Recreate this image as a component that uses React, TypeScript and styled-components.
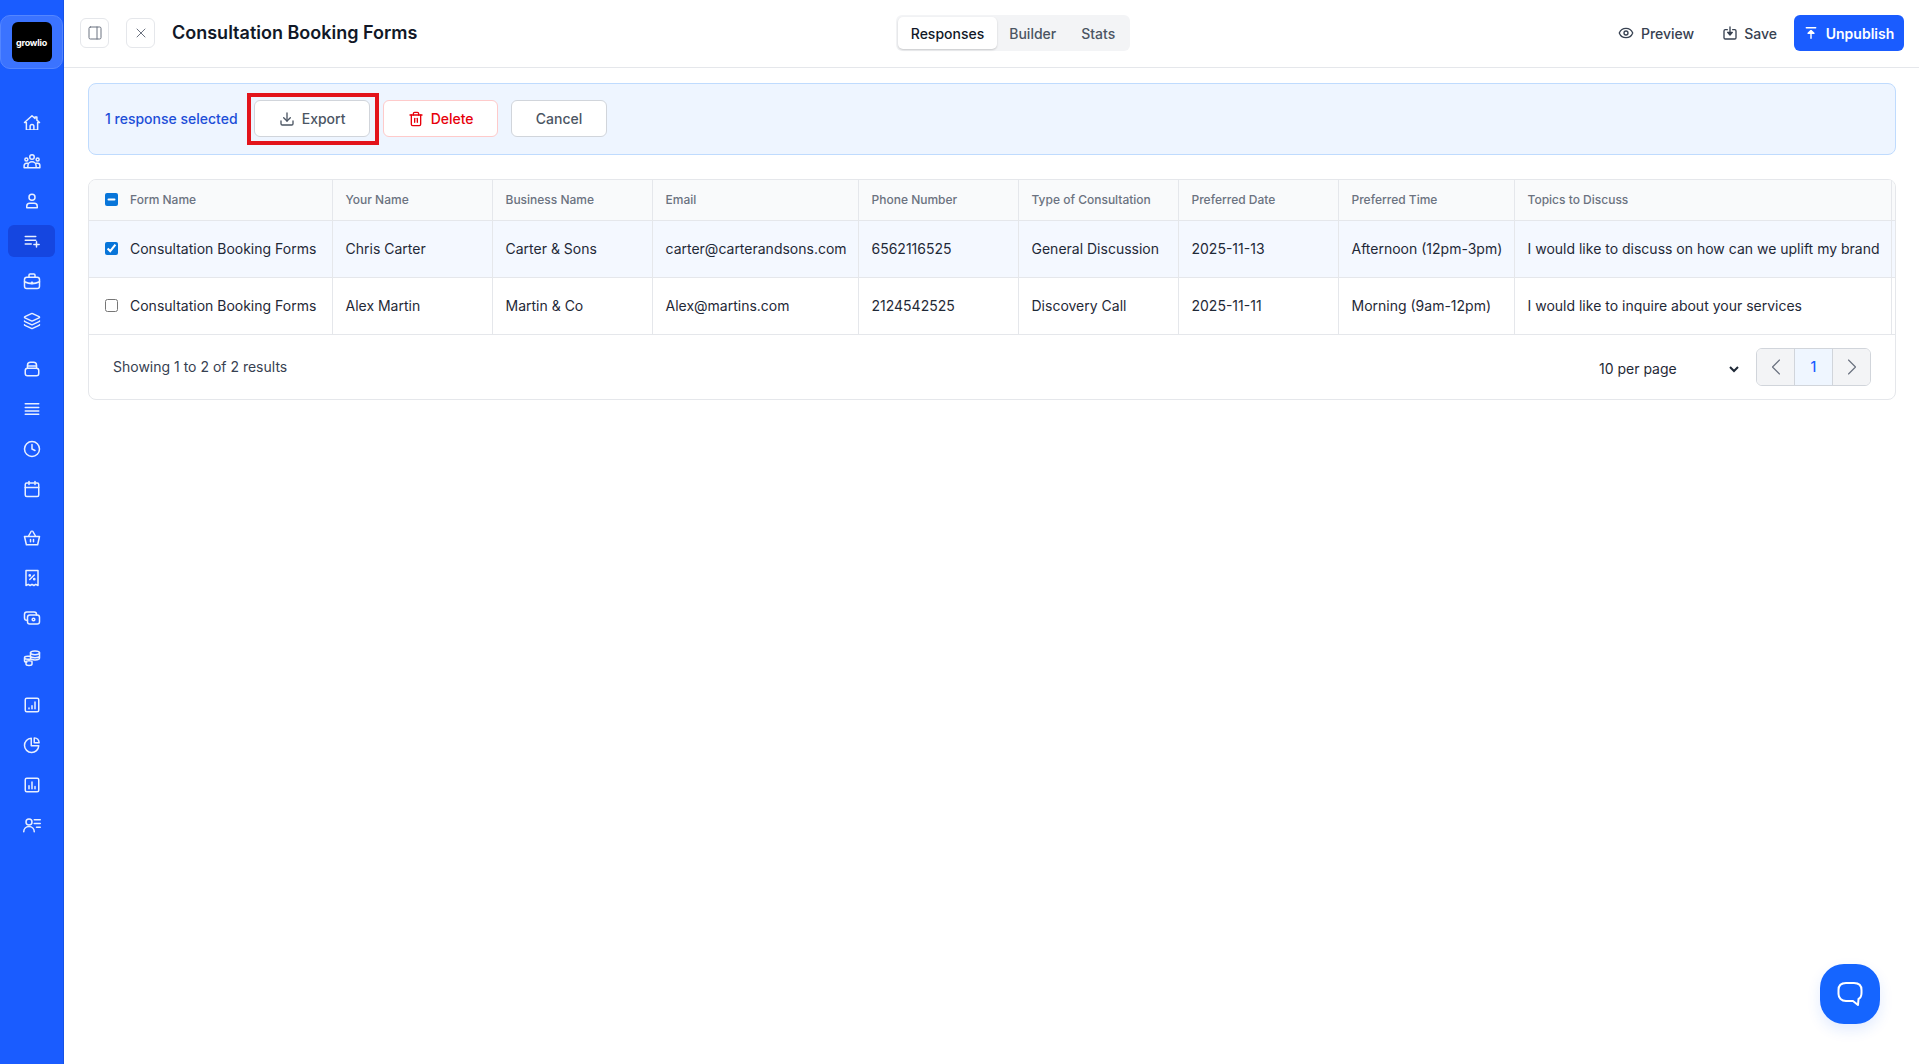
import React, { useEffect, useRef } from "react";
import styled, { createGlobalStyle } from "styled-components";
import {
  Calendar,
  ChevronLeft,
  ChevronRight,
  Clock,
  Download,
  Eye,
  Layers,
  PanelRight,
  Trash2,
  X,
} from "lucide-react";

const GlobalStyle = createGlobalStyle`
  html, body {
    margin: 0;
    padding: 0;
    background: #ffffff;
    font-family: Inter, "Liberation Sans", sans-serif;
    color: #1f2937;
  }
  * { box-sizing: border-box; }
`;

const Page = styled.div`
  display: flex;
  height: 100vh;
  overflow: hidden;
  position: relative;
`;

const Sidebar = styled.nav`
  width: 64px;
  flex: none;
  background: #1a5cff;
  border-right: 1px solid #1652e6;
  display: flex;
  flex-direction: column;
`;

const LogoTile = styled.div`
  margin-top: 15px;
  height: 54px;
  background: #3b73ff;
  border: 1px solid #5486ff;
  border-radius: 10px;
  display: flex;
  align-items: center;
  justify-content: center;
`;

const LogoMark = styled.div`
  width: 40px;
  height: 40px;
  background: #000;
  border-radius: 6px;
  color: #fff;
  font-size: 9px;
  font-weight: 700;
  letter-spacing: -0.2px;
  display: flex;
  align-items: center;
  justify-content: center;
`;

const NavGroup = styled.div<{ $top: number }>`
  display: flex;
  flex-direction: column;
  gap: 8px;
  margin-top: ${(p) => p.$top}px;
`;

const NavItem = styled.a<{ $active?: boolean }>`
  height: 32px;
  margin: 0 8px;
  border-radius: 6px;
  background: ${(p) => (p.$active ? "#1546e0" : "transparent")};
  color: #e8efff;
  display: flex;
  align-items: center;
  justify-content: center;
`;

const Main = styled.main`
  flex: 1;
  min-width: 0;
  display: flex;
  flex-direction: column;
`;

const TopBar = styled.header`
  height: 68px;
  flex: none;
  border-bottom: 1px solid #e5e7eb;
  padding: 0 15px 1px 16px;
  display: grid;
  grid-template-columns: 1fr auto 1fr;
  align-items: center;
`;

const TopLeft = styled.div`
  display: flex;
  align-items: center;
`;

const SquareButton = styled.button`
  width: 29px;
  height: 30px;
  margin-right: 17px;
  padding: 0;
  background: #fff;
  border: 1px solid #e5e7eb;
  border-radius: 6px;
  color: #6b7280;
  display: flex;
  align-items: center;
  justify-content: center;
`;

const Title = styled.h1`
  margin: 0;
  font-size: 18px;
  line-height: 28px;
  font-weight: 600;
  color: #111827;
`;

const Tabs = styled.div`
  height: 36px;
  padding: 2px;
  margin-left: 42px;
  background: #f3f4f6;
  border-radius: 6px;
  display: flex;
  align-items: center;
`;

const Tab = styled.button<{ $active?: boolean }>`
  height: 32px;
  padding: 0 12.5px;
  border: 0;
  border-radius: 5px;
  font: 500 14px Inter, sans-serif;
  background: ${(p) => (p.$active ? "#fff" : "transparent")};
  color: ${(p) => (p.$active ? "#111827" : "#4b5563")};
  box-shadow: ${(p) => (p.$active ? "0 1px 2px rgba(0,0,0,.18)" : "none")};
`;

const TopRight = styled.div`
  display: flex;
  align-items: center;
  justify-content: flex-end;
`;

const GhostButton = styled.button<{ $gap: number; $after: number }>`
  height: 36px;
  padding: 0;
  margin-right: ${(p) => p.$after}px;
  background: none;
  border: 0;
  color: #374151;
  font: 500 14px Inter, sans-serif;
  display: flex;
  align-items: center;
  gap: ${(p) => p.$gap}px;
`;

const PublishButton = styled.button`
  height: 36px;
  width: 110px;
  background: #1a5cff;
  border: 0;
  border-radius: 6px;
  color: #fff;
  font: 600 14px Inter, sans-serif;
  display: flex;
  align-items: center;
  justify-content: center;
  gap: 8px;
`;

const Content = styled.div`
  padding: 15px 23px 0 24px;
  display: flex;
  flex-direction: column;
  gap: 24px;
`;

const Banner = styled.section`
  height: 72px;
  background: #eef5ff;
  border: 1px solid #bfdbfe;
  border-radius: 8px;
  padding: 0 16px 1px;
  display: flex;
  align-items: center;
  gap: 13px;
`;

const SelectedLabel = styled.span`
  font-size: 14px;
  font-weight: 500;
  color: #1d4ed8;
  margin-right: 3px;
`;

const ActionButton = styled.button<{ $danger?: boolean }>`
  position: relative;
  height: 37px;
  padding: 0 0 0 1px;
  width: ${(p) => (p.$danger ? "115px" : "96px")};
  background: #fff;
  border: 1px solid ${(p) => (p.$danger ? "#fecaca" : "#d1d5db")};
  border-radius: 6px;
  color: ${(p) => (p.$danger ? "#e7000b" : "#4b5563")};
  font: 500 14px Inter, sans-serif;
  display: flex;
  align-items: center;
  justify-content: center;
  gap: 7px;
`;

const ExportButton = styled(ActionButton)`
  width: 116px;
  &::after {
    content: "";
    position: absolute;
    inset: -8px -10px -9px -8px;
    border: 4px solid #e3141b;
    pointer-events: none;
  }
`;

const TableCard = styled.section`
  border: 1px solid #e5e7eb;
  border-radius: 8px;
  overflow: hidden;
`;

const Table = styled.table`
  width: 1816px;
  table-layout: fixed;
  border-collapse: collapse;
`;

const HeadCell = styled.th`
  height: 40px;
  padding: 0 12px 0 13px;
  background: #f9fafb;
  border-right: 1px solid #e5e7eb;
  border-bottom: 1px solid #e5e7eb;
  text-align: left;
  font-size: 12px;
  font-weight: 500;
  color: #6b7280;
  white-space: nowrap;
`;

const BodyRow = styled.tr<{ $selected?: boolean }>`
  background: ${(p) => (p.$selected ? "#f4f8ff" : "#fff")};
`;

const BodyCell = styled.td`
  height: 57px;
  padding: 0 12px 0 13px;
  border-right: 1px solid #e5e7eb;
  border-bottom: 1px solid #e5e7eb;
  font-size: 14px;
  color: #1f2937;
  white-space: nowrap;
`;

const CheckWrap = styled.div`
  display: flex;
  align-items: center;
  gap: 12px;
  padding-left: 3px;
`;

const Check = styled.input`
  width: 13px;
  height: 13px;
  margin: 0;
  flex: none;
  accent-color: #0875d9;
`;

const Footer = styled.div`
  height: 64px;
  padding: 0 24px 0 24px;
  display: flex;
  align-items: center;
  justify-content: space-between;
`;

const ResultCount = styled.span`
  font-size: 14px;
  color: #374151;
`;

const FooterRight = styled.div`
  display: flex;
  align-items: center;
  gap: 14px;
`;

const PerPage = styled.select`
  width: 147px;
  height: 30px;
  padding: 0;
  margin-top: 4px;
  border: 0;
  background: #fff;
  font: 14px Inter, sans-serif;
  color: #1f2937;
  outline: none;
`;

const Pager = styled.div`
  height: 38px;
  display: flex;
  border: 1px solid #d1d5db;
  border-radius: 6px;
  overflow: hidden;
`;

const PagerCell = styled.button<{ $current?: boolean }>`
  width: ${(p) => (p.$current ? "39px" : "37px")};
  padding: 0;
  border: 0;
  border-left: ${(p) => (p.$current ? "1px solid #d1d5db" : "0")};
  border-right: ${(p) => (p.$current ? "1px solid #d1d5db" : "0")};
  background: ${(p) => (p.$current ? "#eff6ff" : "#f3f4f6")};
  color: ${(p) => (p.$current ? "#1a5cff" : "#6b7280")};
  font: 500 14px Inter, sans-serif;
  display: flex;
  align-items: center;
  justify-content: center;
`;

const ChatButton = styled.button`
  position: absolute;
  left: 1820px;
  top: 964px;
  width: 60px;
  height: 60px;
  padding: 0;
  border: 0;
  border-radius: 24px;
  background: #1565ff;
  box-shadow: 0 6px 14px rgba(21, 101, 255, 0.12);
  display: flex;
  align-items: center;
  justify-content: center;
`;

// icons the packages don't have in this shape
const Svg = ({ children }: { children: React.ReactNode }) => (
  <svg width="18" height="18" viewBox="0 0 24 24" fill="none" stroke="currentColor" strokeWidth="2" strokeLinecap="round" strokeLinejoin="round">
    {children}
  </svg>
);

const HomeIcon = () => (
  <svg width="18" height="18" viewBox="0 -3 24 24" fill="none" stroke="currentColor" strokeWidth="2" strokeLinecap="round" strokeLinejoin="round">
    <path d="M2 11 12 2l4 3.600V3.500h2.500v4.300L22 11h-2.500v10h-15V11z" />
    <path d="M9.500 21v-5a2.500 2.500 0 0 1 5 0v5" />
  </svg>
);

const TeamIcon = () => (
  <Svg>
    <circle cx="12" cy="6.500" r="3" />
    <circle cx="4.500" cy="10" r="2" />
    <circle cx="19.500" cy="10" r="2" />
    <path d="M6.500 21v-2.500a5.500 5.500 0 0 1 11 0V21M1.500 21v-3a3 3 0 0 1 3-3h2M22.500 21v-3a3 3 0 0 0-3-3h-2M1.500 21h21" />
  </Svg>
);

const UserIcon = () => (
  <Svg>
    <circle cx="12" cy="7" r="4" />
    <path d="M5 21v-2a4 4 0 0 1 4-4h6a4 4 0 0 1 4 4v2z" />
  </Svg>
);

const ListAddIcon = () => (
  <Svg>
    <path d="M3 6h14M3 11h14M3 16h8M18 13v7M14.500 16.500h7" />
  </Svg>
);

const CaseIcon = () => (
  <Svg>
    <rect x="2" y="7" width="20" height="15" rx="3" />
    <path d="M8 7V4a1.500 1.500 0 0 1 1.500-1.500h5A1.500 1.500 0 0 1 16 4v3M2 13c6 3 14 3 20 0" />
    <circle cx="12" cy="14.500" r="0.8" />
  </Svg>
);

const BagIcon = () => (
  <Svg>
    <path d="M6 11V7a4 4 0 0 1 4-4h4a4 4 0 0 1 4 4v4" />
    <rect x="3" y="11" width="18" height="10" rx="3" />
    <path d="M6 8h12" />
  </Svg>
);

const StackLinesIcon = () => (
  <Svg>
    <path d="M3 5h18M3 10h18M3 14.500h18M3 19h18" />
  </Svg>
);

const BasketIcon = () => (
  <Svg>
    <path d="M2 10h20l-2.500 11h-15zM7 10l4-7M17 10l-4-7M10 14v3M14 14v3" />
  </Svg>
);

const ReceiptIcon = () => (
  <Svg>
    <path d="M4 2h16v20l-3-1.500-2.500 1.500-2.500-1.500L9.500 22 7 20.500 4 22z" />
    <path d="M9 14l6-6" />
    <circle cx="9" cy="8.500" r="0.8" />
    <circle cx="15" cy="13.500" r="0.8" />
  </Svg>
);

const CashIcon = () => (
  <Svg>
    <rect x="6" y="8" width="16" height="12" rx="3" />
    <path d="M18 8V7a3 3 0 0 0-3-3H5a3 3 0 0 0-3 3v5a3 3 0 0 0 3 3h1" />
    <circle cx="14" cy="14" r="1.800" />
  </Svg>
);

const CoinsIcon = () => (
  <Svg>
    <ellipse cx="16" cy="5" rx="6" ry="2.500" />
    <path d="M10 5v7c0 1.400 2.700 2.500 6 2.500s6-1.100 6-2.500V5M10 9c0 1.400 2.700 2.500 6 2.500s6-1.100 6-2.500" />
    <path d="M10 9.500H6c-2.200 0-4 .8-4 2s1.800 2 4 2h4M2 11.500v4c0 1.100 1.500 2 3 2M4 17c0-.8 1.500-1.500 4-1.500s4 .7 4 1.500v3c0 1-1.800 2-4 2s-4-1-4-2z" />
  </Svg>
);

const ChartSquareIcon = () => (
  <Svg>
    <rect x="3" y="3" width="18" height="18" rx="2" />
    <path d="M8 17v-1M12 17v-4M16 17V8" />
  </Svg>
);

const PieIcon = () => (
  <Svg>
    <path d="M11 3a9.500 9.500 0 1 0 10 10H11z" />
    <path d="M15 2.500a7 7 0 0 1 6.500 6.500H15z" />
  </Svg>
);

const ReportIcon = () => (
  <Svg>
    <rect x="3" y="3" width="18" height="18" rx="2" />
    <path d="M8 17v-4M12 17V8M16 17v-3" />
  </Svg>
);

const UserListIcon = () => (
  <Svg>
    <circle cx="8" cy="8" r="4" />
    <path d="M1 21c0-4 3-7 7-7s7 3 7 7M15 5h8M15 10h8M18 15h5" />
  </Svg>
);

const SaveIcon = () => (
  <svg width="16" height="16" viewBox="0 0 24 24" fill="none" stroke="currentColor" strokeWidth="2" strokeLinecap="round" strokeLinejoin="round">
    <path d="M8 7H5a2 2 0 0 0-2 2v10a2 2 0 0 0 2 2h14a2 2 0 0 0 2-2V9a2 2 0 0 0-2-2h-3" />
    <path d="M12 3v10" />
    <path d="M8.500 11h7L12 15z" fill="currentColor" />
  </svg>
);

const UnpublishIcon = () => (
  <svg width="14" height="14" viewBox="0 0 24 24" fill="#fff" stroke="#fff" strokeWidth="2.500" strokeLinecap="round" strokeLinejoin="round">
    <path d="M4 3h16M12 21V9" />
    <path d="M7 12.500 12 8l5 4.500z" />
  </svg>
);

const BubbleIcon = () => (
  <svg width="26" height="26" viewBox="0 0 26 26" fill="none" stroke="#fff" strokeWidth="2" strokeLinejoin="round">
    <path d="M9 2h8c4.500 0 7.500 2.500 7.500 7v3c0 3-1 5-3 6l-.5 6-5-4H9c-4.500 0-7.500-3-7.500-7V9C1.500 4.500 4.500 2 9 2z" />
  </svg>
);

const navGroups: { top: number; icons: React.ReactNode[] }[] = [
  {
    top: 36,
    icons: [
      <HomeIcon />,
      <TeamIcon />,
      <UserIcon />,
      <ListAddIcon />,
      <CaseIcon />,
      <Layers size={18} />,
    ],
  },
  { top: 16, icons: [<BagIcon />, <StackLinesIcon />, <Clock size={18} />, <Calendar size={18} />] },
  { top: 17, icons: [<BasketIcon />, <ReceiptIcon />, <CashIcon />, <CoinsIcon />] },
  { top: 15, icons: [<ChartSquareIcon />, <PieIcon />, <ReportIcon />, <UserListIcon />] },
];

const columns: [string, number][] = [
  ["Form Name", 243],
  ["Your Name", 160],
  ["Business Name", 160],
  ["Email", 206],
  ["Phone Number", 160],
  ["Type of Consultation", 160],
  ["Preferred Date", 160],
  ["Preferred Time", 176],
  ["Topics to Discuss", 377],
  ["", 14],
];

const rows = [
  {
    selected: true,
    cells: [
      "Chris Carter",
      "Carter & Sons",
      "carter@carterandsons.com",
      "6562116525",
      "General Discussion",
      "2025-11-13",
      "Afternoon (12pm-3pm)",
      "I would like to discuss on how can we uplift my brand",
    ],
  },
  {
    selected: false,
    cells: [
      "Alex Martin",
      "Martin & Co",
      "Alex@martins.com",
      "2124542525",
      "Discovery Call",
      "2025-11-11",
      "Morning (9am-12pm)",
      "I would like to inquire about your services",
    ],
  },
];

function HeaderCheck() {
  const ref = useRef<HTMLInputElement>(null);
  useEffect(() => {
    if (ref.current) ref.current.indeterminate = true;
  }, []);
  return <Check ref={ref} type="checkbox" readOnly />;
}

export default function App() {
  return (
    <Page>
      <GlobalStyle />
      <Sidebar>
        <LogoTile>
          <LogoMark>growlio</LogoMark>
        </LogoTile>
        {navGroups.map((group, g) => (
          <NavGroup key={g} $top={group.top}>
            {group.icons.map((icon, i) => (
              <NavItem key={i} $active={g === 0 && i === 3}>
                {icon}
              </NavItem>
            ))}
          </NavGroup>
        ))}
      </Sidebar>
      <Main>
        <TopBar>
          <TopLeft>
            <SquareButton>
              <PanelRight size={16} strokeWidth={1.5} />
            </SquareButton>
            <SquareButton>
              <X size={16} strokeWidth={1.5} />
            </SquareButton>
            <Title>Consultation Booking Forms</Title>
          </TopLeft>
          <Tabs>
            <Tab $active>Responses</Tab>
            <Tab>Builder</Tab>
            <Tab>Stats</Tab>
          </Tabs>
          <TopRight>
            <GhostButton $gap={7} $after={28}>
              <Eye size={16} />
              Preview
            </GhostButton>
            <GhostButton $gap={6} $after={17}>
              <SaveIcon />
              Save
            </GhostButton>
            <PublishButton>
              <UnpublishIcon />
              Unpublish
            </PublishButton>
          </TopRight>
        </TopBar>
        <Content>
          <Banner>
            <SelectedLabel>1 response selected</SelectedLabel>
            <ExportButton>
              <Download size={16} />
              Export
            </ExportButton>
            <ActionButton $danger>
              <Trash2 size={16} />
              Delete
            </ActionButton>
            <ActionButton>Cancel</ActionButton>
          </Banner>
          <TableCard>
            <Table>
              <colgroup>
                {columns.map(([name, width], i) => (
                  <col key={i} width={width} />
                ))}
              </colgroup>
              <thead>
                <tr>
                  {columns.map(([name], i) => (
                    <HeadCell key={i}>
                      {i === 0 ? (
                        <CheckWrap>
                          <HeaderCheck />
                          {name}
                        </CheckWrap>
                      ) : (
                        name
                      )}
                    </HeadCell>
                  ))}
                </tr>
              </thead>
              <tbody>
                {rows.map((row) => (
                  <BodyRow key={row.cells[0]} $selected={row.selected}>
                    <BodyCell>
                      <CheckWrap>
                        <Check type="checkbox" defaultChecked={row.selected} />
                        Consultation Booking Forms
                      </CheckWrap>
                    </BodyCell>
                    {row.cells.map((cell) => (
                      <BodyCell key={cell}>{cell}</BodyCell>
                    ))}
                    <BodyCell />
                  </BodyRow>
                ))}
              </tbody>
            </Table>
            <Footer>
              <ResultCount>Showing 1 to 2 of 2 results</ResultCount>
              <FooterRight>
                <PerPage defaultValue="10">
                  <option value="10">10 per page</option>
                </PerPage>
                <Pager>
                  <PagerCell>
                    <ChevronLeft size={28} strokeWidth={1} />
                  </PagerCell>
                  <PagerCell $current>1</PagerCell>
                  <PagerCell>
                    <ChevronRight size={28} strokeWidth={1} />
                  </PagerCell>
                </Pager>
              </FooterRight>
            </Footer>
          </TableCard>
        </Content>
      </Main>
      <ChatButton>
        <BubbleIcon />
      </ChatButton>
    </Page>
  );
}
